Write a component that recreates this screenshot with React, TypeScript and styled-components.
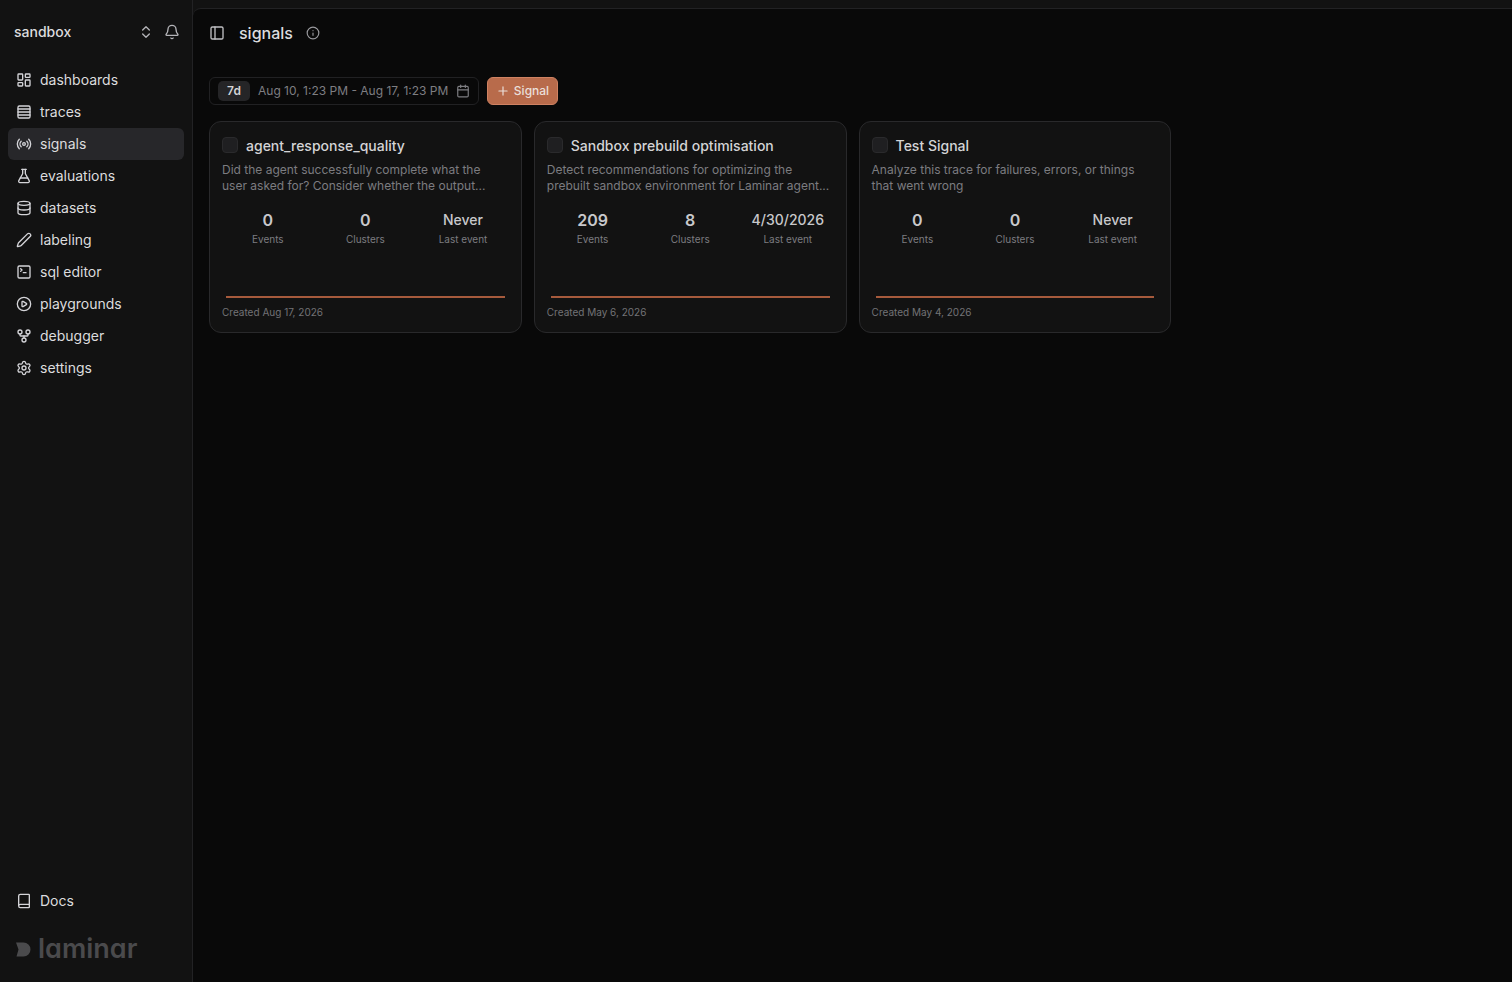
import styled, { createGlobalStyle } from "styled-components";
import {
  Bell,
  Book,
  Calendar,
  ChevronsUpDown,
  CirclePlay,
  Database,
  FlaskConical,
  GitFork,
  Info,
  LayoutDashboard,
  PanelLeft,
  Pen,
  Plus,
  Radio,
  Rows4,
  Settings,
  SquareTerminal,
} from "lucide-react";

const GlobalStyle = createGlobalStyle`
  html, body {
    margin: 0;
    padding: 0;
    height: 100%;
    background: #121212;
    font-family: Inter, "Liberation Sans", sans-serif;
    overflow: hidden;
  }
  * { box-sizing: border-box; }
`;

const Shell = styled.div`
  display: flex;
  width: 1512px;
  height: 982px;
  background: #121212;
`;

const Sidebar = styled.aside`
  width: 192px;
  flex-shrink: 0;
  display: flex;
  flex-direction: column;
  padding: 8px 8px 0;
`;

const WorkspaceRow = styled.div`
  height: 48px;
  display: flex;
  align-items: center;
  padding: 0 4px 0 6px;
  color: #dcdcde;
  font-size: 14px;
  line-height: 20px;
  font-weight: 500;
`;

const WorkspaceName = styled.span`
  flex: 1;
`;

const WorkspaceIcons = styled.div`
  display: flex;
  align-items: center;
  gap: 10px;
  color: #b4b4b8;
`;

const NavList = styled.nav`
  display: flex;
  flex-direction: column;
  margin-top: 8px;
`;

const NavRow = styled.div<{ $active?: boolean }>`
  height: 32px;
  display: flex;
  align-items: center;
  gap: 8px;
  padding: 0 8px;
  border-radius: 6px;
  font-size: 14px;
  line-height: 20px;
  color: #dcdcde;
  background: ${(p) => (p.$active ? "#27272a" : "transparent")};
  svg {
    color: #d4d4d8;
    flex-shrink: 0;
  }
`;

const SidebarFoot = styled.div`
  margin-top: auto;
  display: flex;
  flex-direction: column;
`;

const LogoRow = styled.div`
  display: flex;
  align-items: center;
  gap: 7px;
  height: 32px;
  margin: 16px 0 17px 8px;
  color: #4a4a4c;
`;

const LogoText = styled.span`
  font-size: 27px;
  font-weight: 600;
  font-feature-settings: "cv11";
  line-height: 32px;
`;

const MainWrap = styled.div`
  flex: 1;
  padding-top: 8px;
  border-left: 1px solid #222224;
`;

const Main = styled.main`
  height: 100%;
  background: #090909;
  border-top: 1px solid #222224;
  border-top-left-radius: 8px;
  display: flex;
  flex-direction: column;
`;

const Header = styled.header`
  height: 48px;
  display: flex;
  align-items: center;
  padding-left: 16px;
  color: #dcdcde;
`;

const HeaderToggle = styled.span`
  display: flex;
  color: #c0c0c3;
  margin-right: 14px;
`;

const PageTitle = styled.h1`
  margin: 0 13px 0 0;
  font-size: 16px;
  font-weight: 500;
  color: #dcdcde;
`;

const HeaderInfo = styled.span`
  display: flex;
  color: #9a9a9e;
`;

const Content = styled.div`
  padding: 20px 16px;
  display: flex;
  flex-direction: column;
  gap: 16px;
`;

const Toolbar = styled.div`
  display: flex;
  align-items: center;
  gap: 8px;
`;

const RangePicker = styled.div`
  width: 270px;
  height: 28px;
  display: flex;
  align-items: center;
  padding: 0 8px;
  border: 1px solid #212123;
  border-radius: 6px;
  color: #7e7e82;
  font-size: 12px;
  line-height: 16px;
`;

const RangeTag = styled.span`
  width: 32px;
  height: 20px;
  display: flex;
  align-items: center;
  justify-content: center;
  margin-right: 8px;
  border-radius: 5px;
  background: #252527;
  color: #d4d4d6;
  font-weight: 600;
  font-size: 12px;
`;

const RangeText = styled.span`
  flex: 1;
  white-space: nowrap;
`;

const SignalButton = styled.button`
  width: 71px;
  height: 28px;
  display: flex;
  align-items: center;
  justify-content: center;
  gap: 4px;
  padding: 0;
  border: 1px solid #cf8262;
  border-radius: 6px;
  background: #b86b4b;
  color: #eadfd9;
  font-family: inherit;
  font-size: 12px;
  line-height: 16px;
  font-weight: 500;
`;

const CardRow = styled.div`
  display: flex;
  gap: 12px;
`;

const Card = styled.article`
  width: 312.8px;
  height: 212px;
  display: flex;
  flex-direction: column;
  padding: 12px 12px 0;
  background: #121212;
  border: 1px solid #29292b;
  border-radius: 12px;
`;

const CardHead = styled.div`
  display: flex;
  align-items: center;
  gap: 8px;
  height: 24px;
`;

const Check = styled.span`
  width: 16px;
  height: 16px;
  margin-bottom: 2px;
  border-radius: 4px;
  background: #1f1f21;
  border: 1px solid #2a2a2c;
`;

const CardTitle = styled.h2`
  margin: 0;
  font-size: 14px;
  line-height: 20px;
  font-weight: 500;
  color: #d4d4d6;
`;

const CardDesc = styled.p`
  margin: 4px 0 0;
  height: 32px;
  padding-right: 2px;
  font-size: 12px;
  line-height: 16px;
  color: #7c7c80;
`;

const Stats = styled.div`
  display: grid;
  grid-template-columns: repeat(3, 1fr);
  gap: 6px;
  margin-top: 16px;
`;

const Stat = styled.div`
  display: flex;
  flex-direction: column;
  align-items: center;
  white-space: nowrap;
`;

const StatValue = styled.span`
  font-size: 16px;
  line-height: 20px;
  font-weight: 600;
  color: #c8c8cb;
`;

const LastValue = styled(StatValue)`
  font-size: 14px;
  font-weight: 500;
`;

const StatLabel = styled.span`
  margin-top: 2px;
  font-size: 10px;
  line-height: 14px;
  color: #7c7c80;
`;

const Sparkline = styled.div`
  height: 2px;
  margin: 50px 4px 0;
  background: #a65a3c;
`;

const CardFoot = styled.div`
  margin-top: 7px;
  font-size: 10px;
  line-height: 14px;
  color: #727276;
`;

const LogoMark = () => (
  <svg width="15" height="15" viewBox="0 0 15 15" fill="currentColor">
    <path d="M0 0.5h7.5a7 7 0 0 1 0 14H0.5L2.5 7.5z" />
  </svg>
);

const navItems = [
  { label: "dashboards", icon: <LayoutDashboard size={16} /> },
  { label: "traces", icon: <Rows4 size={16} /> },
  { label: "signals", icon: <Radio size={16} />, active: true },
  { label: "evaluations", icon: <FlaskConical size={16} /> },
  { label: "datasets", icon: <Database size={16} /> },
  { label: "labeling", icon: <Pen size={16} /> },
  { label: "sql editor", icon: <SquareTerminal size={16} /> },
  { label: "playgrounds", icon: <CirclePlay size={16} /> },
  { label: "debugger", icon: <GitFork size={16} /> },
  { label: "settings", icon: <Settings size={16} /> },
];

const signals = [
  {
    title: "agent_response_quality",
    desc: "Did the agent successfully complete what the user asked for? Consider whether the output...",
    events: "0",
    clusters: "0",
    last: "Never",
    created: "Created Aug 17, 2026",
  },
  {
    title: "Sandbox prebuild optimisation",
    desc: "Detect recommendations for optimizing the prebuilt sandbox environment for Laminar agent...",
    events: "209",
    clusters: "8",
    last: "4/30/2026",
    created: "Created May 6, 2026",
  },
  {
    title: "Test Signal",
    desc: "Analyze this trace for failures, errors, or things that went wrong",
    events: "0",
    clusters: "0",
    last: "Never",
    created: "Created May 4, 2026",
  },
];

const App = () => {
  return (
    <Shell>
      <GlobalStyle />
      <Sidebar>
        <WorkspaceRow>
          <WorkspaceName>sandbox</WorkspaceName>
          <WorkspaceIcons>
            <ChevronsUpDown size={16} />
            <Bell size={16} />
          </WorkspaceIcons>
        </WorkspaceRow>
        <NavList>
          {navItems.map((item) => (
            <NavRow key={item.label} $active={item.active}>
              {item.icon}
              {item.label}
            </NavRow>
          ))}
        </NavList>
        <SidebarFoot>
          <NavRow>
            <Book size={16} />
            Docs
          </NavRow>
          <LogoRow>
            <LogoMark />
            <LogoText>laminar</LogoText>
          </LogoRow>
        </SidebarFoot>
      </Sidebar>
      <MainWrap>
        <Main>
          <Header>
            <HeaderToggle>
              <PanelLeft size={16} />
            </HeaderToggle>
            <PageTitle>signals</PageTitle>
            <HeaderInfo>
              <Info size={14} />
            </HeaderInfo>
          </Header>
          <Content>
            <Toolbar>
              <RangePicker>
                <RangeTag>7d</RangeTag>
                <RangeText>Aug 10, 1:23 PM - Aug 17, 1:23 PM</RangeText>
                <Calendar size={14} />
              </RangePicker>
              <SignalButton>
                <Plus size={14} />
                Signal
              </SignalButton>
            </Toolbar>
            <CardRow>
              {signals.map((s) => (
                <Card key={s.title}>
                  <CardHead>
                    <Check />
                    <CardTitle>{s.title}</CardTitle>
                  </CardHead>
                  <CardDesc>{s.desc}</CardDesc>
                  <Stats>
                    <Stat>
                      <StatValue>{s.events}</StatValue>
                      <StatLabel>Events</StatLabel>
                    </Stat>
                    <Stat>
                      <StatValue>{s.clusters}</StatValue>
                      <StatLabel>Clusters</StatLabel>
                    </Stat>
                    <Stat>
                      <LastValue>{s.last}</LastValue>
                      <StatLabel>Last event</StatLabel>
                    </Stat>
                  </Stats>
                  <Sparkline />
                  <CardFoot>{s.created}</CardFoot>
                </Card>
              ))}
            </CardRow>
          </Content>
        </Main>
      </MainWrap>
    </Shell>
  );
};

export default App;
